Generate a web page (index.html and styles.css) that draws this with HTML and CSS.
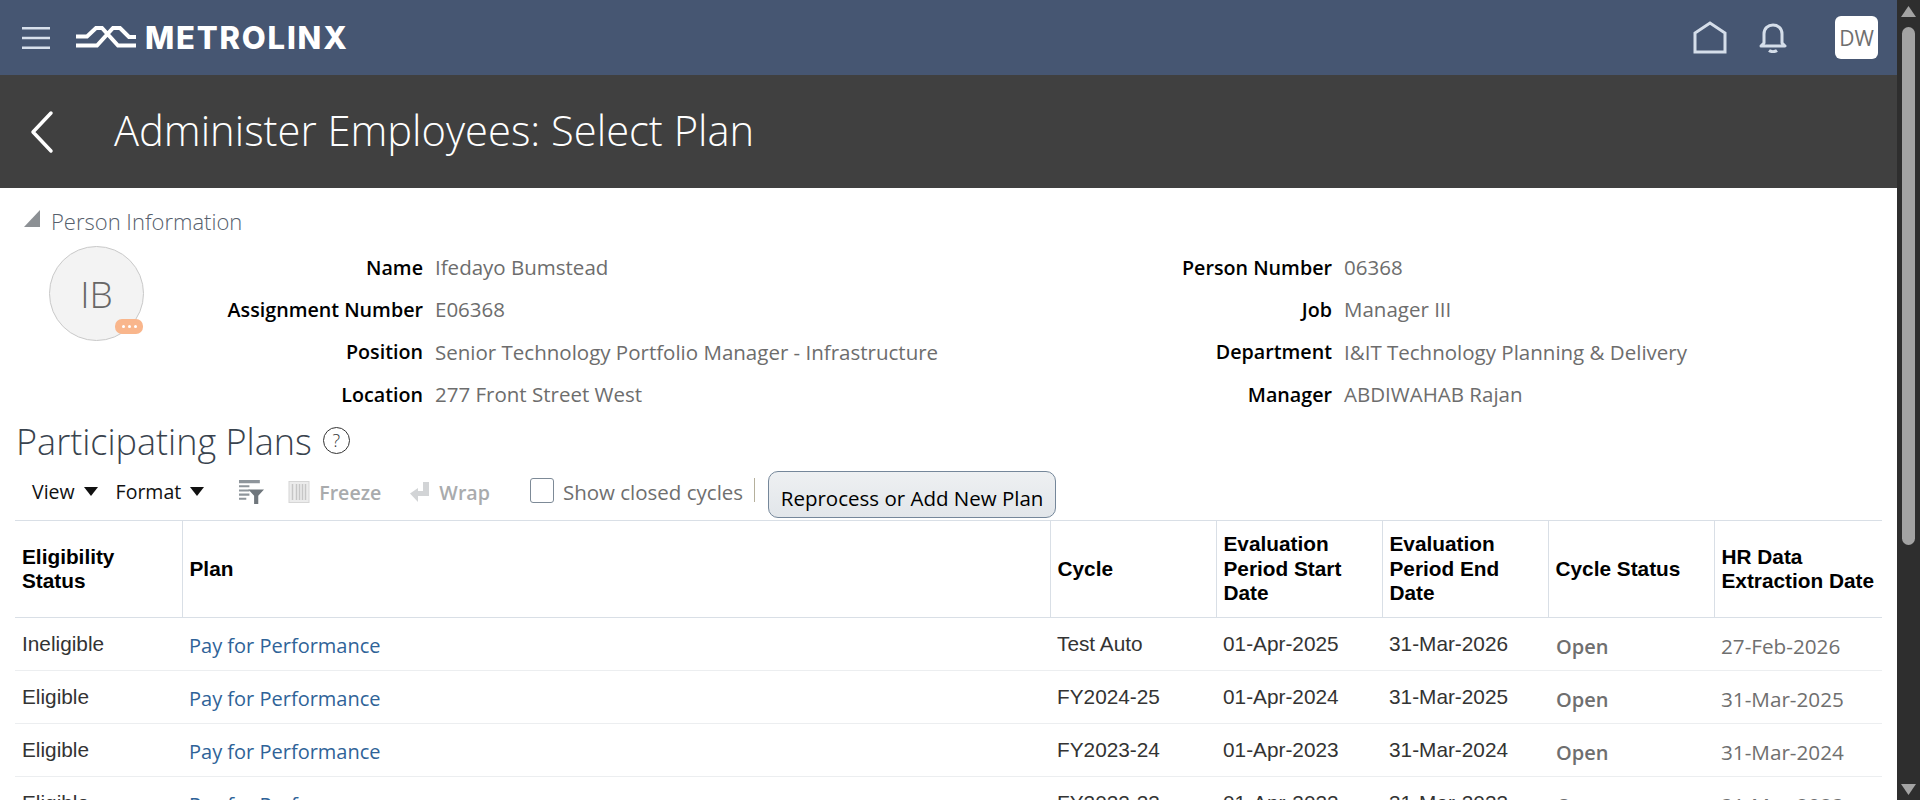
FILE: index.html
```html
<!DOCTYPE html>
<html lang="en">
<head>
<meta charset="utf-8">
<title>Administer Employees: Select Plan</title>
<link rel="stylesheet" href="styles.css">
</head>
<body>
<div class="page">
  <div class="main">
    <header class="topbar">
      <div class="brand">
        <svg class="burger" width="28" height="22" viewBox="0 0 28 22"><path d="M0 1.250h28M0 11h28M0 20.750h28" stroke="#d8e0ec" stroke-width="2.500" fill="none"/></svg>
        <svg class="logo-mark" width="60" height="26" viewBox="0 0 60 26"><path d="M0 20.500H21L37 3H44L53 12H60M0 11.500H11L20 3H26L42 20.500H60" stroke="#fff" stroke-width="4" fill="none"/></svg>
        <span class="logo-text">METROLINX</span>
      </div>
      <div class="top-actions">
        <svg width="34" height="33" viewBox="0 0 34 33"><path d="M2 31V12L17 2L32 12V31Z" stroke="#d5deea" stroke-width="3" fill="none"/></svg>
        <svg class="bell" width="28" height="30" viewBox="0 0 28 30"><path d="M5 20V11C5 5.500 9 2 14 2C19 2 23 5.500 23 11V20L26 23H2Z" stroke="#d5deea" stroke-width="3" fill="none" stroke-linejoin="round"/><path d="M10 27.500C12 29 16 29 18 27.500" stroke="#d5deea" stroke-width="3" fill="none"/></svg>
        <div class="user-tile">DW</div>
      </div>
    </header>
    <div class="titlebar">
      <svg class="back" width="24" height="44" viewBox="0 0 24 44"><path d="M21 3L3 22L21 41" stroke="#fff" stroke-width="3.500" fill="none" stroke-linecap="round" stroke-linejoin="round"/></svg>
      <h1 class="page-title">Administer Employees: Select Plan</h1>
    </div>
    <section class="person">
      <div class="person-head">
        <svg class="twist" width="16" height="17" viewBox="0 0 16 17"><path d="M16 0V17H0Z" fill="#8c9094"/></svg>
        <span class="person-title">Person Information</span>
      </div>
      <div class="person-body">
        <div class="avatar">IB
          <span class="badge"><i></i><i></i><i></i></span>
        </div>
        <div class="fields">
          <div class="lbl">Name</div><div class="val">Ifedayo Bumstead</div><div class="lbl">Person Number</div><div class="val">06368</div>
          <div class="lbl">Assignment Number</div><div class="val">E06368</div><div class="lbl">Job</div><div class="val">Manager III</div>
          <div class="lbl">Position</div><div class="val">Senior Technology Portfolio Manager - Infrastructure</div><div class="lbl">Department</div><div class="val">I&amp;IT Technology Planning &amp; Delivery</div>
          <div class="lbl">Location</div><div class="val">277 Front Street West</div><div class="lbl">Manager</div><div class="val">ABDIWAHAB Rajan</div>
        </div>
      </div>
    </section>
    <section class="plans">
      <div class="plans-head">
        <h2 class="plans-title">Participating Plans</h2>
        <span class="help">?</span>
      </div>
      <div class="toolbar">
        <span class="menu view">View</span><svg class="caret" width="14" height="9" viewBox="0 0 14 9"><path d="M0 0H14L7 9Z" fill="#111"/></svg>
        <span class="menu format">Format</span><svg class="caret" width="14" height="9" viewBox="0 0 14 9"><path d="M0 0H14L7 9Z" fill="#111"/></svg>
        <svg class="ico-filter" width="25" height="25" viewBox="0 0 24 24"><path d="M0 1H20V4H0ZM0 6H10V8H0ZM0 10H10V12H0ZM0 14H10V16H0ZM0 18H7V20H0Z" fill="#8e959b"/><path d="M9 10H24L18.500 16V24H14.500V16Z" fill="#6f767c"/></svg>
        <svg class="ico-freeze" width="22" height="22" viewBox="0 0 21 22"><rect x="0.500" y="0.500" width="20" height="21" fill="#ececec" stroke="#d6d6d6"/><path d="M4 3V19M8 3V19M11 3V19M14 3V19M17 3V19" stroke="#c6c6c6" stroke-width="1.500"/></svg>
        <span class="dim freeze">Freeze</span>
        <svg class="ico-wrap" width="20" height="20" viewBox="0 0 20 20"><path d="M13 0H19V14H8V20L0 11.500L8 6V9H13Z" fill="#d2d4d6"/></svg>
        <span class="dim wrap">Wrap</span>
        <span class="check"></span>
        <span class="check-label">Show closed cycles</span>
        <span class="sep"></span>
        <button class="action" type="button">Reprocess or Add New Plan</button>
      </div>
      <table class="grid">
        <colgroup>
          <col class="c1"><col class="c2"><col class="c3"><col class="c4"><col class="c5"><col class="c6"><col class="c7">
        </colgroup>
        <thead>
          <tr><th>Eligibility Status</th><th>Plan</th><th>Cycle</th><th>Evaluation Period Start Date</th><th>Evaluation Period End Date</th><th>Cycle Status</th><th>HR Data Extraction Date</th></tr>
        </thead>
        <tbody>
          <tr><td>Ineligible</td><td><a class="link">Pay for Performance</a></td><td>Test Auto</td><td>01-Apr-2025</td><td>31-Mar-2026</td><td class="ro"><span class="open">Open</span></td><td class="ro">27-Feb-2026</td></tr>
          <tr><td>Eligible</td><td><a class="link">Pay for Performance</a></td><td>FY2024-25</td><td>01-Apr-2024</td><td>31-Mar-2025</td><td class="ro"><span class="open">Open</span></td><td class="ro">31-Mar-2025</td></tr>
          <tr><td>Eligible</td><td><a class="link">Pay for Performance</a></td><td>FY2023-24</td><td>01-Apr-2023</td><td>31-Mar-2024</td><td class="ro"><span class="open">Open</span></td><td class="ro">31-Mar-2024</td></tr>
          <tr><td>Eligible</td><td><a class="link">Pay for Performance</a></td><td>FY2022-23</td><td>01-Apr-2022</td><td>31-Mar-2023</td><td class="ro"><span class="open">Open</span></td><td class="ro">31-Mar-2023</td></tr>
        </tbody>
      </table>
    </section>
  </div>
  <div class="scrollbar">
    <svg width="15" height="11" viewBox="0 0 15 11"><path d="M7.500 0L15 11H0Z" fill="#a3a3a3"/></svg>
    <div class="thumb"></div>
    <svg class="down" width="15" height="11" viewBox="0 0 15 11"><path d="M0 0H15L7.500 11Z" fill="#a3a3a3"/></svg>
  </div>
</div>
</body>
</html>
```
FILE: styles.css
```css
* { box-sizing: border-box; }
html, body { margin: 0; padding: 0; height: 800px; overflow: hidden; background: #fff; }
body { font-family: "Open Sans", "Liberation Sans", sans-serif; }
.page { display: flex; width: 1920px; height: 800px; overflow: hidden; }
.main { width: 1897px; height: 800px; overflow: hidden; flex: none; }

.topbar { height: 75px; background: #465672; display: flex; align-items: center; justify-content: space-between; padding: 0 19px 0 22px; }
.brand { display: flex; align-items: center; }
.burger { margin-right: 26px; }
.logo-mark { margin-right: 9px; }
.logo-text { font-family: Inter, sans-serif; font-weight: 800; font-size: 31px; color: #fff; letter-spacing: 1.800px; line-height: 30px; }
.top-actions { display: flex; align-items: center; }
.bell { margin-left: 32px; }
.user-tile { width: 43px; height: 43px; margin-left: 48px; background: #fff; border-radius: 6px; color: #6f6f6f; font-size: 21px; display: flex; align-items: center; justify-content: center; }

.titlebar { height: 113px; background: #404040; display: flex; align-items: center; padding-left: 30px; }
.page-title { margin: 0 0 3px 60px; font-weight: 300; font-size: 41.700px; color: #fff; line-height: 56px; }

.person { height: 232px; }
.person-head { display: flex; align-items: flex-end; padding: 0 0 0 24px; height: 48px; }
.twist { margin-bottom: 9px; }
.person-title { margin-left: 11px; font-weight: 300; font-size: 22px; line-height: 30px; color: #56606c; }
.person-body { display: flex; align-items: flex-start; padding: 10px 0 0 49px; }
.avatar { position: relative; flex: none; width: 95px; height: 95px; border-radius: 50%; background: #f3f3f3; border: 1px solid #c9c9c9; color: #666; font-size: 37px; font-weight: 300; display: flex; align-items: center; justify-content: center; }
.badge { position: absolute; right: 0; bottom: 6px; width: 28px; height: 15px; border-radius: 7px; background: #f9b68c; display: flex; align-items: center; justify-content: center; gap: 3px; }
.badge i { width: 3px; height: 3px; background: #fff; border-radius: 50%; }
.fields { display: grid; grid-template-columns: 279px 600px 285px 400px; column-gap: 12px; grid-auto-rows: 42.300px; align-items: center; }
.lbl { text-align: right; font-weight: 600; font-size: 19.700px; color: #000; white-space: nowrap; }
.val { font-weight: 500; font-size: 20.500px; color: #6d6d6d; white-space: nowrap; }

.plans { padding-left: 16px; }
.plans-head { display: flex; align-items: center; height: 44px; }
.plans-title { margin: 0; font-weight: 300; font-size: 36px; line-height: 44px; color: #39434e; }
.help { width: 27px; height: 27px; margin: 0 0 4px 11px; border: 1.500px solid #333; border-radius: 50%; display: flex; align-items: center; justify-content: center; font-size: 18px; font-weight: 300; color: #333; }

.toolbar { display: flex; align-items: center; height: 56px; padding-left: 16px; }
.menu { color: #111; font-size: 19.500px; margin-top: -2px; }
.caret { margin-left: 9px; margin-top: -2px; }
.format { margin-left: 18px; }
.ico-filter { margin-left: 35px; margin-top: -2px; }
.ico-freeze { margin-left: 24px; }
.dim { color: #a9abad; font-weight: 600; font-size: 19.600px; }
.freeze { margin-left: 9px; }
.ico-wrap { margin-left: 29px; }
.wrap { margin-left: 9px; }
.check { width: 24px; height: 25px; margin-left: 40px; border: 1px solid #7d8a97; border-radius: 3px; background: #fff; margin-top: -4px; }
.check-label { margin-left: 9px; color: #6f6f6f; font-weight: 500; font-size: 20.500px; }
.sep { width: 1px; height: 24px; background: #b5b09c; margin: -4px 0 0 11px; }
.action { margin-left: 13px; width: 288px; height: 47px; border: 1px solid #75879a; border-radius: 10px; background: linear-gradient(#eef0f2, #e2e6ea); font-family: "Open Sans", sans-serif; font-size: 20.500px; font-weight: 500; color: #000; padding: 6px 0 0; margin-top: 5px; white-space: nowrap; }

.grid { border-collapse: collapse; table-layout: fixed; width: 1867px; font-family: "Liberation Sans", Arial, sans-serif; font-size: 20.800px; margin-left: -1px; }
.c1 { width: 167px; } .c2 { width: 868px; } .c3 { width: 166px; } .c4 { width: 166px; } .c5 { width: 166px; } .c6 { width: 166px; } .c7 { width: 168px; }
.grid th { height: 97px; padding: 0 7px; text-align: left; font-weight: 700; line-height: 24.500px; color: #000; border-top: 1px solid #d9dfe6; border-bottom: 1px solid #d9dfe6; border-left: 1px solid #d9dfe6; }
.grid th:first-child { border-left: 0; }
.grid td { height: 53px; padding: 0 7px; color: #333; border-bottom: 1px solid #eceef0; white-space: nowrap; }
.link { font-family: "Open Sans", sans-serif; font-weight: 500; font-size: 20px; color: #2f6398; padding-top: 3px; display: inline-block; }
.grid td.ro { font-family: "Open Sans", sans-serif; font-weight: 500; font-size: 20.700px; padding-top: 3px; color: #6f6f6f; }
.open { font-weight: 600; font-size: 20px; padding-left: 1px; }

.scrollbar { flex: 1; background: #2e2e2e; display: flex; flex-direction: column; align-items: center; padding: 6px 0 5px; }
.thumb { width: 13px; height: 518px; margin-top: 10px; background: #a3a3a3; border-radius: 7px; }
.down { margin-top: auto; }
```
